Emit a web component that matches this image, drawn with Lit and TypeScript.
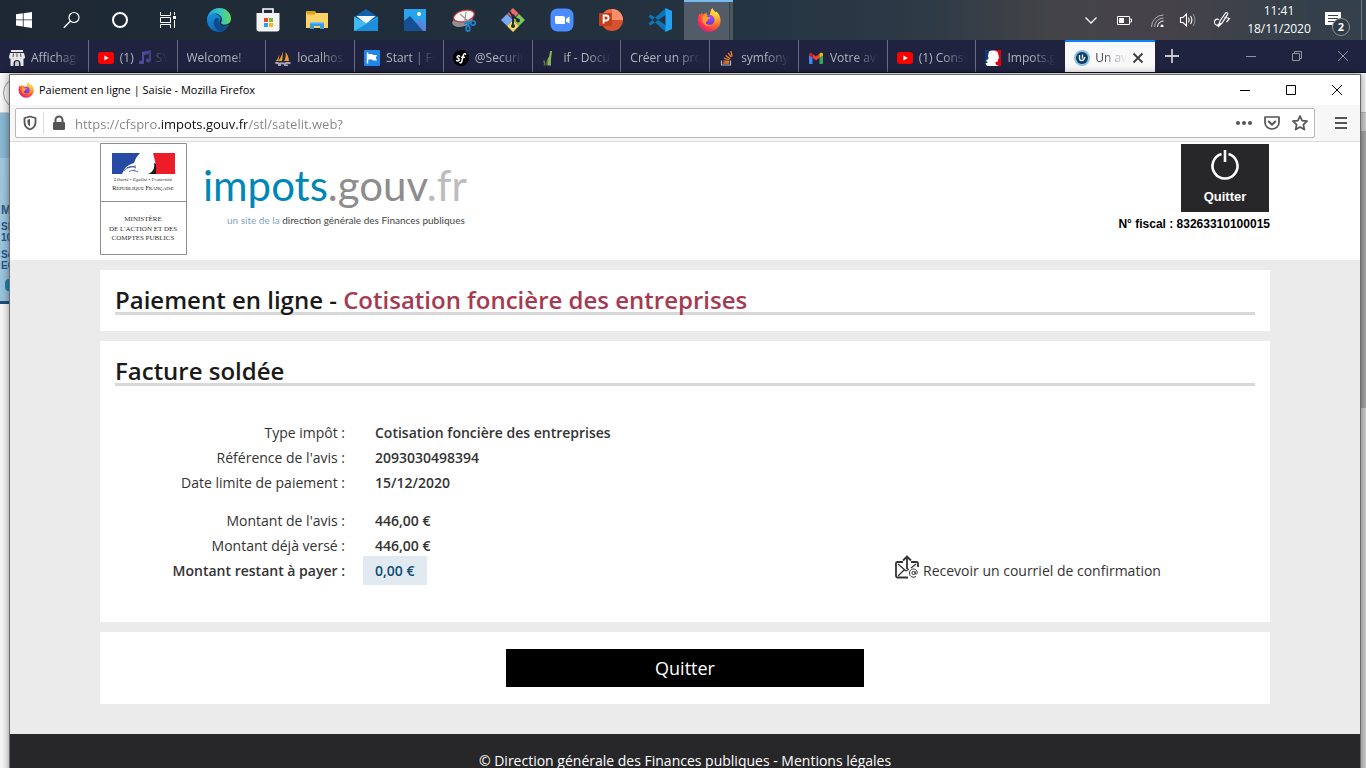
import { LitElement, html, css, svg, nothing, type TemplateResult } from "lit";
import { customElement, state } from "lit/decorators.js";
import { classMap } from "lit/directives/class-map.js";

type Icon = TemplateResult;

const icon = (size: number, viewBox: string, body: unknown): Icon =>
  html`<svg width=${size} height=${size} viewBox=${viewBox} fill="none" aria-hidden="true">${body}</svg>`;

const firefox = (size: number, id: string) =>
  icon(size, "0 0 24 24", svg`
    <defs>
      <radialGradient id="${id}a" cx="0.8" cy="0.1" r="1.05">
        <stop offset="0" stop-color="#fff14a"/><stop offset="0.35" stop-color="#ffb02a"/>
        <stop offset="0.6" stop-color="#ff6a2f"/><stop offset="0.85" stop-color="#f52a5b"/>
        <stop offset="1" stop-color="#d81f86"/>
      </radialGradient>
      <radialGradient id="${id}b" cx="0.6" cy="0.3" r="0.8">
        <stop offset="0" stop-color="#a34dff"/><stop offset="1" stop-color="#5b35c9"/>
      </radialGradient>
    </defs>
    <path fill="url(#${id}a)" d="M2.2 5.2 3.6 7l1.2-2.6.9 2 2-.6 2-1.2-.2 2.2 3.2.3L13.4 4c.2-1.8 1.2-3.2 2.4-4 .2 2.2 1.8 3 3.2 4.6l.6-1.2c2.4 2.4 4 5.6 4 8.8a11.4 11.4 0 0 1-22.8.2c0-2.6.6-5 1.4-7.2z"/>
    <circle cx="12.500" cy="12" r="5" fill="url(#${id}b)"/>
    <path fill="#ff9a2b" d="M6 8.6c1.6-1 3.8-.8 5 .6l2.4.4c0 1.2-1.6 1.6-2.6 1.9l-.3 1.7c-1 .5-1.8.6-1.6 2 .7 1.6 3 1.8 4.6 1.2-2 2.2-6.6 1.4-7.6-2.2-.6-2-.5-4 .1-5.6z"/>
  `);

const youtube = icon(16, "0 0 16 16", svg`
  <rect x="0" y="2" width="16" height="12" rx="3" fill="#f00"/><path d="M6.4 5.4v5.2L10.8 8z" fill="#fff"/>`);

const tabIcons: Record<string, Icon> = {
  youtube,
  shop: icon(16, "0 0 16 16", svg`
    <path fill="#e8e6e6" d="M2 0h12v2H2zM1 3h14l1 4c0 1-.6 2-2 2s-2-.8-2-1c0 .4-.8 1-2 1s-2-.6-2-1c0 .4-.8 1-2 1s-2-.6-2-1c0 .2-.6 1-2 1S0 8 0 7zM1.500 8.500h13V16h-3v-2.500a3 3 0 0 0-7 0V16h-3z"/>
    <path stroke="#55535f" d="M4.500 3.500 4 7M8 3.500V7M11.500 3.500 12 7"/><path fill="#c9c7cc" d="M6 13a2 2 0 0 1 4 0v3H6z"/>`),
  boat: icon(16, "0 0 16 16", svg`
    <path fill="#f59a23" d="M7.500 1c-.2 4-2 7.500-4.600 10H7c.8-3 1-7 .5-10zM10.500 2c.6 3 .2 6.400-1.400 9H14c-.2-3.600-1.500-7-3.500-9zM4 4.500C3.600 7.500 2.500 9.500.8 11H2.800C4 9 4.400 6.500 4 4.500z"/>
    <path stroke="#a9a3ba" stroke-width="2" d="M.5 13.500c2-2 3 1 5 0s3 .8 5-.2 3-1 5 .2M3 15.500h3M9 15.500h4"/>`),
  flag: icon(16, "0 0 16 16", svg`
    <rect width="16" height="16" rx="1" fill="#2387ea"/><path stroke="#fff" stroke-width="1.500" d="M3.500 2.500v11"/>
    <path fill="#fff" d="M4 4h4l1 1h4l-1.200 2.700L13 10.500H9l-1-1H4z"/>`),
  symfony: icon(16, "0 0 16 16", svg`
    <circle cx="8" cy="8" r="8" fill="#000"/>
    <path stroke="#fff" stroke-width="1.500" stroke-linecap="round" d="M6.600 6.200c-1-.8-2.600-.3-2.500.9.100 1.100 2.200 1.100 2.100 2.500-.1 1.300-1.700 1.600-2.700.9M12.600 4.200c-.7-.8-2-.4-2.400 1.400L8.900 11c-.3 1.500-1.200 2.200-2 1.700M8.600 7.200h2.800"/>`),
  grass: icon(16, "0 0 16 16", svg`
    <path stroke="#8fb558" stroke-width="2" d="M6.500 15.500C5.500 12.500 6 9.500 8 7M9 1C8.500 5 7.500 10 8 15.500"/>
    <path stroke="#5e7c40" stroke-width="1.500" d="M2.500 15.500c.5-2 .2-3.500-.8-5M5 15c0-2 .2-4 .8-5.500"/>`),
  stack: icon(16, "0 0 16 16", svg`
    <path stroke="#b9b9c2" stroke-width="1.200" d="M2.500 10.500v4.500h9v-4.500"/>
    <path stroke="#f48024" stroke-width="1.300" d="M4.200 13h5.800M4.400 10.800l5.700.8M5 8l5.400 2.200M6.700 5.400l4.400 3.400M9.200 2.800l3 4.400M12 1l1 5.400"/>`),
  gmail: icon(16, "0 0 16 16", svg`
    <path fill="#4285f4" d="M1 5v8c0 .6.400 1 1 1h2.500V7.500z"/><path fill="#34a853" d="M15 5v8c0 .6-.4 1-1 1h-2.500V7.500z"/>
    <path fill="#ea4335" d="M4.500 3.800 8 6.500l3.500-2.700v4L8 10.500 4.500 7.800z"/>
    <path fill="#c5221f" d="M1 4.200C1 2.800 2.600 2.300 3.600 3l.9.800v4L1 5.300z"/><path fill="#fbbc04" d="M15 4.200c0-1.400-1.600-1.900-2.600-1.200l-.9.800v4L15 5.300z"/>`),
  marianne: icon(16, "0 0 16 16", svg`
    <path fill="#123a78" d="M0 0h7v16H0z"/><path fill="#e1000f" d="M9 0h7v16H9z"/>
    <path fill="#fff" d="M4 1.500C6 0 10 0 12 1.500c1.200 1 1 2.500 1.600 4l.6 3-1.200.6-.2 2.400-2.400.5.400 2.500L14 16H2l-1.500-2.500 2.300-1L1 10.500 3.500 9 3 6z"/>`),
  avis: icon(16, "0 0 16 16", svg`
    <circle cx="8" cy="8" r="8" fill="#8fc4e2"/><circle cx="8" cy="8" r="6" fill="#0f3c66"/>
    <path stroke="#e9f5fc" stroke-width="1.400" d="M5.500 5v3.500c0 2.500 4 2.500 4.500.5L11 7M8.500 4.500v4"/>`),
};

interface Tab { label: string; icon?: string; note?: boolean; active?: boolean }

const tabs: Tab[] = [
  { label: "Affichage", icon: "shop" },
  { label: "(1)", icon: "youtube", note: true },
  { label: "Welcome!" },
  { label: "localhost", icon: "boat" },
  { label: "Start | Fo", icon: "flag" },
  { label: "@Securit", icon: "symfony" },
  { label: "if - Docu", icon: "grass" },
  { label: "Créer un proj" },
  { label: "symfony", icon: "stack" },
  { label: "Votre avis", icon: "gmail" },
  { label: "(1) Consu", icon: "youtube" },
  { label: "Impots.g", icon: "marianne" },
  { label: "Un avis", icon: "avis", active: true },
];

const note = svg`<path fill="#54489a" d="M4 2l9-2v10.500a2.500 2 0 1 1-2-1.900V4L6 5v7.500a2.500 2 0 1 1-2-1.900z"/>`;

const system: [string, Icon][] = [
  ["Démarrer", icon(16, "0 0 16 16", svg`<path fill="#fff" d="M0 2.300 6.800 1.300V7.500H0zM7.600 1.200 16 0v7.500H7.600zM0 8.300h6.800v6.300L0 13.600zM7.600 8.300H16V16l-8.400-1.200z"/>`)],
  ["Rechercher", icon(18, "0 0 18 18", svg`<circle cx="11" cy="6.500" r="5" stroke="#fff" stroke-width="1.200"/><path stroke="#fff" stroke-width="1.300" d="M7.300 10.200.8 16.700"/>`)],
  ["Cortana", icon(18, "0 0 18 18", svg`<circle cx="9" cy="9" r="7" stroke="#fff" stroke-width="2"/>`)],
  ["Affichage des tâches", icon(18, "0 0 18 18", svg`<path stroke="#fff" d="M1.500 1v3.500h10V1M1.500 17v-3.500h10V17M1.500 6.500h10v5h-10zM15.500 1v3M15.500 9v8"/><path fill="#fff" d="M14 5h3v3h-3z"/>`)],
];

const apps: [string, Icon][] = [
  ["Edge", icon(24, "0 0 24 24", svg`
    <defs>
      <linearGradient id="eg" x1="0" y1="0.400" x2="1" y2="0.300"><stop stop-color="#1b9de2"/><stop offset="0.550" stop-color="#33c6c4"/><stop offset="1" stop-color="#69dc4e"/></linearGradient>
      <linearGradient id="eb" x1="0" y1="0" x2="0.600" y2="1"><stop stop-color="#1796e0"/><stop offset="1" stop-color="#0e5fae"/></linearGradient>
    </defs>
    <path fill="url(#eb)" d="M0 12C0 6 5 3 11 7c3 2 3.500 4 2 6-1.600 2.600.5 5 4 5 2.200 0 3.800-.8 4.800-1.200C19.800 21.200 16.500 24 12 24 5.400 24 0 18.600 0 12z"/>
    <path fill="#114a8b" d="M9 10c-4 3.500-2.500 10.500 3.500 13.300 4.500-.5 7.700-3 9.300-6.500-3.800 2.600-9 1.800-10-2-.4-1.800.1-2.600.6-4.300z"/>
    <path fill="url(#eg)" d="M0 11.500C.6 5 5.600 0 12 0c7 0 12 5 12 10.500 0 4-3 6-6.200 6-2.600 0-4-1-3.800-1.800.4-1 1.400-1.600 1-3.700C14.500 7.500 11 5.500 7.500 5.500 4 5.500.8 8 0 11.500z"/>`)],
  ["Microsoft Store", icon(24, "0 0 24 24", svg`
    <path stroke="#fff" stroke-width="1.600" d="M7 6V1h10v5"/><path fill="#f4f4f4" d="M.5 5h23v16c0 1.600-.8 2.500-2.500 2.500H3c-1.700 0-2.500-.9-2.500-2.500z"/>
    <path fill="#e8452c" d="M8 10h4v4H8z"/><path fill="#7cb83f" d="M13 10h4v4h-4z"/><path fill="#22a5ee" d="M8 15h4v4H8z"/><path fill="#fdb913" d="M13 15h4v4h-4z"/>`)],
  ["Explorateur", icon(22, "0 0 22 20", svg`
    <path fill="#e0a21b" d="M0 1h9l2 3H0z"/><path fill="#fbd367" d="M0 3h22v15H0z"/><path fill="#e0a21b" d="M1 3h8v1.500H1z"/>
    <path fill="#3b9be0" d="M4 12h14v7h-4v-3H8v3H4z"/><path fill="#79c2f3" d="M4 12h14v1.500H4z"/>`)],
  ["Courrier", icon(24, "0 0 24 24", svg`
    <path fill="#1261ae" d="M0 9 12 1l12 8v6H0z"/><path fill="#f3f6f9" d="M2.500 8h19L12 16z"/><path fill="#2aa8ec" d="M0 8.500 12 16l12-7.500V23H0z"/><path fill="#1c8fdc" d="m0 23 24-13v13z"/><path fill="#40bcf5" d="M0 9v14l16-9.500L12 15z"/>`)],
  ["Photos", icon(22, "0 0 22 22", svg`
    <path fill="#27a4ea" d="M0 0h22v22H0z"/><path fill="#5b83d8" d="m9 16 7-6 6 6v6H9z"/><path fill="#154f94" d="m0 12 6-5 13 15H0z"/><circle cx="15" cy="5" r="2" fill="#fff"/>`)],
  ["Capture d'écran", icon(24, "0 0 24 24", svg`
    <ellipse cx="10.500" cy="13" rx="10.500" ry="5.500" fill="#8d9197" transform="rotate(-16 10 13)"/>
    <ellipse cx="12" cy="8" rx="10.500" ry="5.500" fill="#f6f6f6" stroke="#d2383c" stroke-width="1.200" transform="rotate(-14 12 8)"/>
    <path stroke="#9a9a9a" stroke-width="1.200" d="m8 6 9 8M14 4l-1.500 11"/>
    <path stroke="#1e86cf" stroke-width="1.800" d="M12 15.500 19 14M15 13l2 6"/><circle cx="21" cy="15" r="2.200" stroke="#1e86cf" stroke-width="1.600"/><ellipse cx="16" cy="20.500" rx="1.900" ry="2.600" stroke="#1e86cf" stroke-width="1.600"/>`)],
  ["Git", icon(24, "0 0 24 24", svg`
    <path fill="#f06a6a" d="m12 0 5.500 5.500-5.500 5.500-5.500-5.500z"/><path fill="#77a9f5" d="m6 6 6 6-6 6-6-6z"/><path fill="#80c65a" d="m18 6 6 6-6 6-6-6z"/><path fill="#f6d85c" d="m12 12 6 6-6 6-6-6z"/>
    <path stroke="#222c36" stroke-width="2" d="m8 3 4 5v10M12 8l5 4"/><circle cx="12" cy="8" r="1.800" fill="#222c36"/><circle cx="12" cy="18" r="2" fill="#222c36"/><circle cx="17" cy="12.500" r="2" fill="#222c36"/>`)],
  ["Zoom", icon(24, "0 0 24 24", svg`
    <rect x=".5" y=".5" width="23" height="23" rx="7" fill="#4a8cff"/><path fill="#fff" d="M5 8h8c1.400 0 2 .8 2 2v6H7c-1.400 0-2-.8-2-2zM16 11l3.500-2.500v7L16 13.500z"/>`)],
  ["PowerPoint", icon(24, "0 0 24 24", svg`
    <circle cx="13" cy="12" r="11" fill="#d35230"/><path fill="#ff8f6b" d="M13 1a11 11 0 0 1 11 11H13z"/><path fill="#ed6c47" d="M13 1v11H2A11 11 0 0 1 13 1z"/>
    <rect y="5" width="13" height="13" rx="1" fill="#c43e1c"/><path stroke="#fff" stroke-width="1.800" d="M4.600 15.500v-8H7c3.400 0 3.400 5 0 5H4.600"/>`)],
  ["VS Code", icon(24, "0 0 24 24", svg`
    <path fill="#0b76bd" d="m.5 8.500 2-2L18 17.500V24zM.5 15.500l2 2L18 6.500V0z"/><path fill="#23a3ef" d="m17.500 0 6.500 3v18l-6.500 3z"/>`)],
  ["Firefox", firefox(24, "fxb")],
];

const windowIcons: [string, Icon][] = [
  ["Réduire", icon(12, "0 0 12 12", svg`<path stroke="currentColor" d="M1 6.500h10"/>`)],
  ["Agrandir", icon(12, "0 0 12 12", svg`<path stroke="currentColor" d="M1.500 1.500h9v9h-9z"/>`)],
  ["Fermer", icon(12, "0 0 12 12", svg`<path stroke="currentColor" d="m1 1 10 10M11 1 1 11"/>`)],
];
const restoreIcon = icon(12, "0 0 12 12", svg`<path stroke="currentColor" d="M1.500 3.500h7v7h-7zM3.500 3.500v-2h7v7h-2"/>`);

@customElement("task-bar")
export class TaskBar extends LitElement {
  static styles = css`
    :host {
      display: flex; justify-content: space-between; height: 40px; overflow: hidden; color: #fff;
      background: linear-gradient(90deg, #1d2833 0, #202d3a 30%, #263543 58%, #2e3a46 68%, #444448 77%, #454249 86%, #33404b 96%, #35424d 100%);
      font: 12px/18px "Open Sans", "Noto Sans", sans-serif;
    }
    button { border: 0; padding: 0; margin: 0; background: none; color: inherit; font: inherit; display: flex; align-items: center; justify-content: center; }
    .group { display: flex; }
    .system { width: 48px; }
    .apps { padding-left: 2px; }
    .app { width: 49px; }
    .running { background: linear-gradient(90deg, #515c68 45px, #36434c 45px, #36434c 46px, #4b5759 46px); border-top: 2px solid #76b9ed; padding-bottom: 2px; }
    .chevron { width: 32px; } .battery { width: 33px; } .wifi { width: 33px; } .sound { width: 30px; } .pen { width: 38px; }
    .clock { width: 76px; flex-direction: column; }
    .notices { position: relative; width: 44px; justify-content: flex-start; padding-left: 8px; }
    .badge {
      position: absolute; left: 15px; top: 18px; width: 16px; height: 16px; border: 1px solid #8d9297; border-radius: 50%;
      background: #333b44; font-size: 11px; line-height: 16px; font-weight: 700; text-align: center;
    }
    .edge { width: 4px; border-left: 1px solid #6f7a83; }
  `;

  render() {
    return html`
      <div class="group">
        ${system.map(([name, glyph]) => html`<button class="system" aria-label=${name}>${glyph}</button>`)}
        <div class="group apps">
          ${apps.map(([name, glyph]) => html`
            <button class=${classMap({ app: true, running: name === "Firefox" })} aria-label=${name}>${glyph}</button>`)}
        </div>
      </div>
      <div class="group">
        <button class="chevron" aria-label="Icônes cachées">${icon(14, "0 0 14 14", svg`<path stroke="#fff" stroke-width="1.300" d="m1.500 4.500 5.500 5.500 5.500-5.500"/>`)}</button>
        <button class="battery" aria-label="Batterie">${icon(16, "0 0 16 16", svg`<path stroke="#fff" d="M1.500 4.500h12v8h-12zM14 7h1.500v3H14"/><path fill="#fff" d="M3 6h5v5H3z"/>`)}</button>
        <button class="wifi" aria-label="Réseau">${icon(14, "0 0 14 14", svg`<g stroke="#aeb0b4"><path d="M1.500 14A12 12 0 0 1 13.500 2"/><path d="M4.500 14a9 9 0 0 1 9-9"/></g><g stroke="#fff"><path d="M7.500 14a6 6 0 0 1 6-6"/></g><circle cx="12" cy="13" r="1.500" fill="#fff"/>`)}</button>
        <button class="sound" aria-label="Volume">${icon(18, "0 0 18 18", svg`<path stroke="#fff" stroke-width="1.100" d="M1.500 6.500H4l3.500-3.500v12L4 11.500H1.500zM9.500 6.500q1.500 2.500 0 5M11.500 5q2.800 4 0 8"/><path stroke="#8e9299" d="M14 3q4 6 0 12"/>`)}</button>
        <button class="pen" aria-label="Windows Ink">${icon(18, "0 0 18 18", svg`<path stroke="#fff" stroke-width="1.200" d="M5 16 7 10l5.500-8c1-1.200 3 .3 2 1.600L9 12zM6 8.500C3 7 1 9.500 1.500 12S5 15 7.500 12.500M11.500 6l5 1.500-3 3.500"/>`)}</button>
        <button class="clock"><span>11:41</span><span>18/11/2020</span></button>
        <button class="notices" aria-label="Notifications">
          ${icon(18, "0 0 18 18", svg`<path fill="#fff" d="M0 1h16v13h-6l-3 3v-3H0z"/><path stroke="#38424c" d="M3 4.500h10M3 7.500h10M3 10.500h7"/>`)}
          <span class="badge">2</span>
        </button>
        <div class="edge"></div>
      </div>`;
  }
}

@customElement("tab-strip")
export class TabStrip extends LitElement {
  static styles = css`
    :host { display: flex; height: 33px; box-sizing: border-box; border-bottom: 1px solid #0f1020; background: #202340; color: #b4b5c0; font: 12px/16px "Open Sans", "Noto Sans", sans-serif; }
    button { border: 0; padding: 0; margin: 0; background: none; color: inherit; font: inherit; display: flex; align-items: center; justify-content: center; }
    svg { flex: none; }
    .tabs { flex: 1; display: flex; min-width: 0; }
    .tab { flex: 1 1 0; min-width: 0; justify-content: flex-start; gap: 6px; padding: 3px 9px 0; border-right: 1px solid #6a6b7e; box-sizing: border-box; }
    .label { flex: 1; display: flex; gap: 4px; min-width: 0; overflow: hidden; white-space: nowrap; text-align: left; mask-image: linear-gradient(90deg, #000 calc(100% - 24px), transparent); }
    .faint { opacity: .7; }
    .active { background: #f9f9fa; color: #44454f; border-right: 0; border-top: 2px solid #0a84ff; padding: 1px 11px 0 9px; gap: 5px; }
    .before { border-right-color: transparent; }
    .new { width: 34px; color: #c8c9d1; }
    .controls { display: flex; padding-left: 39px; color: #9193a3; }
    .control { width: 46px; }
  `;

  @state() private current = tabs.length - 1;

  render() {
    return html`
      <div class="tabs" role="tablist">
        ${tabs.map((tab, i) => html`
          <button role="tab" aria-selected=${i === this.current}
            class=${classMap({ tab: true, active: i === this.current, before: i === this.current - 1 })}
            @click=${() => (this.current = i)}>
            ${tab.icon ? tabIcons[tab.icon] : nothing}
            <span class="label">${tab.label}${tab.note ? html`${icon(14, "0 0 14 14", note)}<span class="faint">SY</span>` : nothing}</span>
            ${i === this.current ? icon(12, "0 0 12 12", svg`<path stroke="#3c3c42" stroke-width="1.800" d="m1.500 1.500 9 9M10.500 1.500l-9 9"/>`) : nothing}
          </button>`)}
      </div>
      <button class="new" aria-label="Nouvel onglet">${icon(14, "0 0 14 14", svg`<path stroke="currentColor" stroke-width="1.800" d="M7 0v14M0 7h14"/>`)}</button>
      <div class="controls">
        ${windowIcons.map(([name, glyph], i) => html`<button class="control" aria-label=${name}>${i === 1 ? restoreIcon : glyph}</button>`)}
      </div>`;
  }
}

@customElement("tax-page")
export class TaxPage extends LitElement {
  static styles = css`
    :host { display: flex; flex-direction: column; flex: 1; min-height: 0; overflow: hidden; background: #ebebeb; color: #333; font: 14px/25px "Open Sans", "Noto Sans", sans-serif; }
    .wrap { margin: 0 90px; }
    .top { background: #fff; flex: none; }
    .banner { display: flex; align-items: flex-start; height: 118px; box-sizing: border-box; padding-top: 1px; }
    .ministry { flex: none; }
    .brand { display: flex; flex-direction: column; margin-left: 16px; padding-top: 16px; font-family: Lato, sans-serif; }
    .name { font-size: 42px; line-height: 53px; color: #0087b6; white-space: nowrap; }
    .gouv { color: #8d8d8e; }
    .tld { color: #bcbcbc; }
    .tagline { font-size: 10px; line-height: 16px; padding-left: 24px; color: #444; white-space: nowrap; }
    .soft { color: #7fa5c2; }
    .account { margin-left: auto; display: flex; flex-direction: column; align-items: flex-end; padding-top: 1px; font: bold 12px/16px "Liberation Sans", Arial, sans-serif; color: #000; }
    .power { display: flex; flex-direction: column; align-items: center; gap: 8px; width: 88px; height: 68px; margin: 0 1px 4px 0; padding: 5px 0 0; border: 0; background: #272729; color: #fff; font: bold 13px/16px "Liberation Sans", Arial, sans-serif; }
    .panel { background: #fff; margin-top: 10px; padding: 16px 15px; }
    h1, h2 { margin: 0; height: 26px; border-bottom: 3px solid #d8d8d8; font-size: 24px; line-height: 27px; font-weight: 600; color: #1a1a1a; white-space: nowrap; }
    .tax { color: #a63a50; }
    .invoice { padding-bottom: 39px; }
    .rows { display: grid; grid-template-columns: 230px 1fr 360px; margin: 34px 0 0; }
    dl { margin: 0; display: contents; }
    dt { grid-column: 1; text-align: right; }
    dd { grid-column: 2; margin: 0 0 0 30px; font-weight: 600; }
    .gap { margin-top: 13px; }
    .total { font-weight: 600; }
    .due { margin: -2px 0 -2px 18px; padding: 2px 13px 2px 12px; justify-self: start; background: #e0eaf0; color: #0f4c75; }
    a { color: inherit; text-decoration: none; }
    .mail { grid-column: 3; display: flex; gap: 4px; align-items: center; white-space: nowrap; }
    .mail svg { margin-top: -8px; }
    .actions { padding: 17px 15px; display: flex; justify-content: center; }
    .quit { width: 358px; height: 38px; border: 0; padding: 0; background: #000; color: #fff; font: 18px/25px "Open Sans", "Noto Sans", sans-serif; }
    .footer { margin-top: 30px; flex: 1 0 auto; padding: 14px 0; background: #272729; color: #fff; text-align: center; }
  `;

  private ministry = html`
    <svg class="ministry" width="87" height="112" viewBox="0 0 87 112" role="img" aria-label="République Française">
      <path fill="#fff" stroke="#8e8e8e" d="M.5.5h86v111H.5zM.5 58.500h86"/>
      <path fill="#274ba5" d="M12 10h28l-4 5-2 5 1 4-1 7H12z"/><path fill="#ec1c28" d="M53 10h22v21H55c-1-2 0-4 1-6l-1-7z"/>
      <path fill="#fff" d="M24 27c2-4 6-6 10-7l3 3-3 4 2 4H22z"/>
      <path fill="none" stroke="#4a5f9c" d="M24 28c3-4 7-6 12-3M29 29c2-2 5-2 9 0M27 25l9-2"/>
      <path fill="#1a1a1a" d="M54 20c1 5-1 9-6 11h8V21z"/>
      <g font-family="Liberation Serif, serif" fill="#333" text-anchor="middle">
        <text x="43" y="38" font-size="5" font-style="italic">Liberté • Egalité • Fraternité</text>
        <text x="43" y="47" font-size="6" fill="#111">R<tspan font-size="5">ÉPUBLIQUE</tspan> F<tspan font-size="5">RANÇAISE</tspan></text>
        <text x="43" y="78" font-size="7">MINISTÈRE</text>
        <text x="43" y="88" font-size="7">DE L'ACTION ET DES</text>
        <text x="43" y="97" font-size="7">COMPTES PUBLICS</text>
      </g>
    </svg>`;

  render() {
    return html`
      <header class="top">
        <div class="wrap banner">
          ${this.ministry}
          <div class="brand">
            <span class="name">impots<span class="gouv">.gouv</span><span class="tld">.fr</span></span>
            <span class="tagline"><span class="soft">un site de la</span> direction générale des Finances publiques</span>
          </div>
          <div class="account">
            <button class="power">
              ${icon(32, "0 0 32 32", svg`<path stroke="#fff" stroke-width="2.600" d="M12.500 5a12.500 12.500 0 1 0 7 0M16 1v12"/>`)}
              <span>Quitter</span>
            </button>
            <span>N° fiscal : 83263310100015</span>
          </div>
        </div>
      </header>
      <section class="wrap panel"><h1>Paiement en ligne - <span class="tax">Cotisation foncière des entreprises</span></h1></section>
      <section class="wrap panel invoice">
        <h2>Facture soldée</h2>
        <div class="rows">
          <dl>
            <dt>Type impôt :</dt><dd>Cotisation foncière des entreprises</dd>
            <dt>Référence de l'avis :</dt><dd>2093030498394</dd>
            <dt>Date limite de paiement :</dt><dd>15/12/2020</dd>
            <dt class="gap">Montant de l'avis :</dt><dd class="gap">446,00 €</dd>
            <dt>Montant déjà versé :</dt><dd>446,00 €</dd>
            <dt class="total">Montant restant à payer :</dt><dd class="due">0,00 €</dd>
          </dl>
          <a class="mail" href="#courriel">
            ${icon(24, "0 0 24 24", svg`
              <path stroke="#333" stroke-width="1.800" d="M8 7H2.500c-.9 0-1.500.6-1.500 1.500V21c0 .9.600 1.500 1.500 1.500H13M16 7h5.500c.9 0 1.500.6 1.500 1.500V12M12 14V2M8 5.500l4-4 4 4"/>
              <path stroke="#333" stroke-width="1.300" d="m3 9 8 7M3 21l6-6M21 9l-5 4M14 14l-3 2"/>
              <circle cx="18.500" cy="18" r="1.600" stroke="#333"/><path stroke="#333" d="M20.200 16.200v2.200c0 1.400 2 1.200 2-.6 0-5.200-7.700-5-7.700.2 0 4 4 5 6.500 3.500"/>`)}
            <span>Recevoir un courriel de confirmation</span>
          </a>
        </div>
      </section>
      <section class="wrap panel actions"><button class="quit">Quitter</button></section>
      <footer class="footer">© Direction générale des Finances publiques - <a href="#mentions">Mentions légales</a></footer>`;
  }
}

@customElement("popup-window")
export class PopupWindow extends LitElement {
  static styles = css`
    :host { display: flex; flex-direction: column; min-width: 0; box-sizing: border-box; border: 1px solid #6b6b6b; border-bottom: 0; background: #fff; font: 12px/16px "Open Sans", "Noto Sans", sans-serif; }
    button { border: 0; padding: 0; margin: 0; background: none; color: inherit; font: inherit; display: flex; align-items: center; justify-content: center; }
    .title { display: flex; align-items: center; gap: 5px; height: 30px; padding-left: 8px; color: #000; white-space: nowrap; font-size: 11px; }
    .controls { display: flex; margin-left: auto; height: 30px; }
    .control { width: 46px; }
    .nav { display: flex; padding: 3px 0 3px 5px; background: #f7f7f8; border-bottom: 1px solid #dcdcdc; color: #545456; }
    .bar { flex: 1; display: flex; align-items: center; box-sizing: border-box; height: 30px; border: 1px solid #b9b9bb; border-radius: 2px; background: #fff; }
    .shield { width: 28px; border-right: 1px solid #dcdcdc; height: 22px; }
    .lock { width: 29px; }
    .url {
      flex: 1; min-width: 0; padding: 2px 0 0 2px; border: 0; outline: 0; font: 13px/18px "Open Sans", "Noto Sans", sans-serif; color: transparent; background-clip: text; -webkit-background-clip: text;
      background-image: linear-gradient(90deg, #828282 86px, #0c0c0d 86px, #0c0c0d 174px, #828282 174px);
    }
    .action { width: 28px; }
    .menu { width: 45px; padding-left: 7px; }
  `;

  render() {
    return html`
      <div class="title">
        ${firefox(16, "fxs")}<span>Paiement en ligne | Saisie - Mozilla Firefox</span>
        <div class="controls">${windowIcons.map(([name, glyph]) => html`<button class="control" aria-label=${name}>${glyph}</button>`)}</div>
      </div>
      <div class="nav">
        <div class="bar">
          <button class="shield" aria-label="Protection">${icon(16, "0 0 16 16", svg`<path stroke="currentColor" stroke-width="1.800" stroke-linejoin="round" d="M8 1.500 13.500 3v4c0 4-2.500 6.500-5.500 7.500C5 13.500 2.500 11 2.500 7V3z"/><path fill="currentColor" d="M8 4v7.500C6.500 10.500 5.500 9 5.500 7V4.700z"/>`)}</button>
          <button class="lock" aria-label="Connexion sécurisée">${icon(16, "0 0 16 16", svg`<path stroke="currentColor" stroke-width="2" d="M4.500 8V5a3.500 3.500 0 0 1 7 0v3"/><rect x="2" y="7" width="12" height="8" rx="1.200" fill="currentColor"/>`)}</button>
          <input class="url" aria-label="Adresse" spellcheck="false" .value=${"https://cfspro.impots.gouv.fr/stl/satelit.web?"}>
          <button class="action" aria-label="Actions">${icon(16, "0 0 16 16", svg`<g fill="currentColor"><circle cx="2" cy="8" r="2"/><circle cx="8" cy="8" r="2"/><circle cx="14" cy="8" r="2"/></g>`)}</button>
          <button class="action" aria-label="Pocket">${icon(16, "0 0 16 16", svg`<path stroke="currentColor" stroke-width="1.700" stroke-linejoin="round" d="M1 2h14v5.500a7 6.500 0 0 1-14 0z"/><path stroke="currentColor" stroke-width="2" stroke-linecap="round" d="M4.800 6.500 8 9.600l3.200-3.100"/>`)}</button>
          <button class="action" aria-label="Marque-page">${icon(16, "0 0 16 16", svg`<path stroke="currentColor" stroke-width="1.700" stroke-linejoin="round" d="m8 1 2.100 4.600 5 .6-3.700 3.400 1 5L8 12.100l-4.400 2.500 1-5L.9 6.200l5-.6z"/>`)}</button>
        </div>
        <button class="menu" aria-label="Menu">${icon(12, "0 0 12 12", svg`<path stroke="currentColor" stroke-width="2" d="M0 1h12M0 6h12M0 11h12"/>`)}</button>
      </div>
      <tax-page></tax-page>`;
  }
}

@customElement("app-root")
export class AppRoot extends LitElement {
  static styles = css`
    :host { display: flex; flex-direction: column; height: 100vh; overflow: hidden; }
    .desk { flex: 1; min-height: 0; display: grid; grid-template-columns: 9px minmax(0, 1fr) 5px; background: #f7f7f7; }
    .popup { position: relative; margin-top: 1px; box-shadow: 0 0 8px rgba(0, 0, 0, .45); }
    .left { overflow: hidden; white-space: nowrap; font: bold 10px/11px "Liberation Sans", Arial, sans-serif; color: #23548d; }
    .back { height: 40px; box-sizing: border-box; padding: 4px 0 0 3px; border-bottom: 1px solid #ccc; }
    .round { width: 30px; height: 30px; border: 1px solid #999; border-radius: 50%; }
    .side { height: 191px; box-sizing: border-box; padding: 90px 0 0 1px; background: linear-gradient(#8ab9d3 45px, #a3c9e0 45px, #9ac4dc); border-bottom: 3px solid #1f4f80; }
    .side p { margin: 0 0 6px; }
    .side .big { font-size: 12px; line-height: 14px; margin-bottom: 4px; color: #345a85; }
    .dot { width: 10px; height: 12px; margin: 8px 0 0 4px; border-radius: 4px; background: #1f86b5; }
    .right { display: grid; grid-template-rows: 40px 18px 277px 1fr; background: #cfcfcf; }
    .chrome { background: #f7f7f7; border-bottom: 1px solid #bbb; }
    .thumb { grid-row: 3; background: #a6a6a6; }
  `;

  render() {
    return html`
      <task-bar></task-bar>
      <tab-strip></tab-strip>
      <div class="desk">
        <div class="left">
          <div class="back"><div class="round"></div></div>
          <div class="side"><p class="big">M</p><p>SI<br>10</p><p>Se<br>EC</p><div class="dot"></div></div>
        </div>
        <popup-window class="popup"></popup-window>
        <div class="right"><div class="chrome"></div><div class="thumb"></div></div>
      </div>`;
  }
}
